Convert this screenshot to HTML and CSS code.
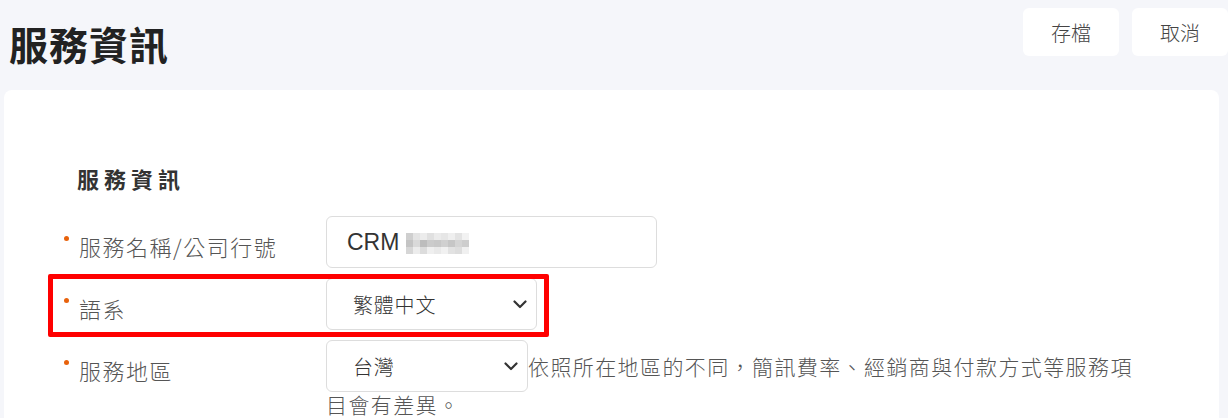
FILE: index.html
```html
<!DOCTYPE html>
<html lang="zh-Hant">
<head>
  <meta charset="UTF-8">
  <meta name="viewport" content="width=device-width, initial-scale=1.0">
  <title>服務資訊</title>
  <link rel="stylesheet" href="styles.css">
</head>
<body>

  <header class="header">
    <h1 class="title">服務資訊</h1>
    <div class="actions">
      <button class="btn" type="button">存檔</button>
      <button class="btn" type="button">取消</button>
    </div>
  </header>

  <main class="card">
    <h2 class="section-title">服務資訊</h2>

    <div class="row">
      <label class="label">服務名稱/公司行號</label>
      <div class="input">
        <span>CRM</span>
        <svg class="mosaic" width="63" height="21" viewBox="0 0 63 21">
          <rect x="0" y="0" width="7" height="7" fill="#cfcfcf"/>
          <rect x="7" y="0" width="7" height="7" fill="#e4e4e4"/>
          <rect x="14" y="0" width="7" height="7" fill="#ececec"/>
          <rect x="21" y="0" width="7" height="7" fill="#e0e0e0"/>
          <rect x="28" y="0" width="7" height="7" fill="#ebebeb"/>
          <rect x="35" y="0" width="7" height="7" fill="#e6e6e6"/>
          <rect x="42" y="0" width="7" height="7" fill="#efefef"/>
          <rect x="49" y="0" width="7" height="7" fill="#e3e3e3"/>
          <rect x="56" y="0" width="7" height="7" fill="#f2f2f2"/>
          <rect x="0" y="7" width="7" height="7" fill="#c4c4c4"/>
          <rect x="7" y="7" width="7" height="7" fill="#d9d9d9"/>
          <rect x="14" y="7" width="7" height="7" fill="#bdbdbd"/>
          <rect x="21" y="7" width="7" height="7" fill="#cbcbcb"/>
          <rect x="28" y="7" width="7" height="7" fill="#c8c8c8"/>
          <rect x="35" y="7" width="7" height="7" fill="#d0d0d0"/>
          <rect x="42" y="7" width="7" height="7" fill="#c6c6c6"/>
          <rect x="49" y="7" width="7" height="7" fill="#d4d4d4"/>
          <rect x="56" y="7" width="7" height="7" fill="#cdcdcd"/>
          <rect x="0" y="14" width="7" height="7" fill="#d6d6d6"/>
          <rect x="7" y="14" width="7" height="7" fill="#ececec"/>
          <rect x="14" y="14" width="7" height="7" fill="#dcdcdc"/>
          <rect x="21" y="14" width="7" height="7" fill="#efefef"/>
          <rect x="28" y="14" width="7" height="7" fill="#e9e9e9"/>
          <rect x="35" y="14" width="7" height="7" fill="#f1f1f1"/>
          <rect x="42" y="14" width="7" height="7" fill="#e2e2e2"/>
          <rect x="49" y="14" width="7" height="7" fill="#dddddd"/>
          <rect x="56" y="14" width="7" height="7" fill="#f0f0f0"/>
        </svg>
      </div>
    </div>

    <div class="row highlight">
      <label class="label">語系</label>
      <div class="select select-lang">
        <span>繁體中文</span>
        <svg class="chevron" width="14" height="9" viewBox="0 0 14 9">
          <path d="M1.5 1.5 L7 7 L12.5 1.5" fill="none" stroke="#333" stroke-width="2.2" stroke-linecap="round" stroke-linejoin="round"/>
        </svg>
      </div>
    </div>

    <div class="row">
      <label class="label">服務地區</label>
      <div class="field">
        <div class="select select-region">
          <span>台灣</span>
          <svg class="chevron" width="14" height="9" viewBox="0 0 14 9">
            <path d="M1.5 1.5 L7 7 L12.5 1.5" fill="none" stroke="#333" stroke-width="2.2" stroke-linecap="round" stroke-linejoin="round"/>
          </svg>
        </div><span class="help">依照所在地區的不同，簡訊費率、經銷商與付款方式等服務項</span><br>
        <span class="help">目會有差異。</span>
      </div>
    </div>
  </main>

</body>
</html>
```

FILE: styles.css
```css
*,
*::before,
*::after {
  box-sizing: border-box;
}

body {
  margin: 0;
  background: #f5f6fa;
  font-family: "Noto Sans CJK TC", "Liberation Sans", sans-serif;
  color: #333;
  overflow: hidden;
}

.header {
  display: flex;
  justify-content: space-between;
  align-items: flex-start;
  height: 90px;
  padding-left: 9px;
}

.title {
  margin: 20px 0 0;
  font-size: 39px;
  line-height: 46px;
  font-weight: 700;
  letter-spacing: 1px;
  color: #222;
}

.actions {
  display: flex;
  gap: 13px;
  padding-top: 8px;
}

.btn {
  width: 96px;
  height: 48px;
  border: none;
  border-radius: 6px;
  background: #fff;
  font-family: inherit;
  font-size: 20px;
  font-weight: 300;
  color: #444;
  cursor: pointer;
}

.card {
  width: 1215px;
  min-height: 400px;
  margin-left: 4px;
  padding: 72px 56px 40px;
  background: #fff;
  border-radius: 8px 8px 0 0;
}

.section-title {
  margin: 0 0 22px 17px;
  font-size: 22px;
  line-height: 32px;
  font-weight: 700;
  letter-spacing: 5px;
  color: #333;
}

.row {
  display: flex;
  align-items: flex-start;
  margin-bottom: 10px;
}

.label {
  flex: none;
  width: 266px;
  padding-top: 17px;
  font-size: 22px;
  line-height: 26px;
  font-weight: 300;
  letter-spacing: 1.5px;
  color: #555;
}

.label::before {
  content: "";
  display: inline-block;
  width: 5px;
  height: 5px;
  margin: 3px 10px 0 4px;
  border-radius: 50%;
  background: #e8620c;
  vertical-align: top;
}

.input {
  display: flex;
  align-items: center;
  gap: 7px;
  width: 331px;
  height: 52px;
  padding: 0 20px;
  border: 1px solid #ddd;
  border-radius: 6px;
  font-family: "Liberation Sans", Arial, sans-serif;
  font-size: 23px;
  color: #333;
}

.mosaic {
  display: block;
  margin-top: 2px;
}

.select {
  display: inline-flex;
  align-items: center;
  justify-content: space-between;
  height: 52px;
  padding: 0 9px 0 26px;
  border: 1px solid #ddd;
  border-radius: 6px;
  font-size: 20px;
  font-weight: 300;
  color: #333;
  letter-spacing: 0.8px;
}

.select-lang {
  width: 211px;
}

.select-region {
  width: 202px;
}

.chevron {
  display: block;
}

.field {
  width: 815px;
  font-size: 21px;
  line-height: 25px;
  font-weight: 300;
  letter-spacing: 1.4px;
  color: #555;
}

.highlight {
  position: relative;
}

.highlight::after {
  content: "";
  position: absolute;
  left: -12px;
  top: -4px;
  width: 501px;
  height: 63px;
  border: 5px solid #f00;
  border-radius: 2px;
  pointer-events: none;
}
```
